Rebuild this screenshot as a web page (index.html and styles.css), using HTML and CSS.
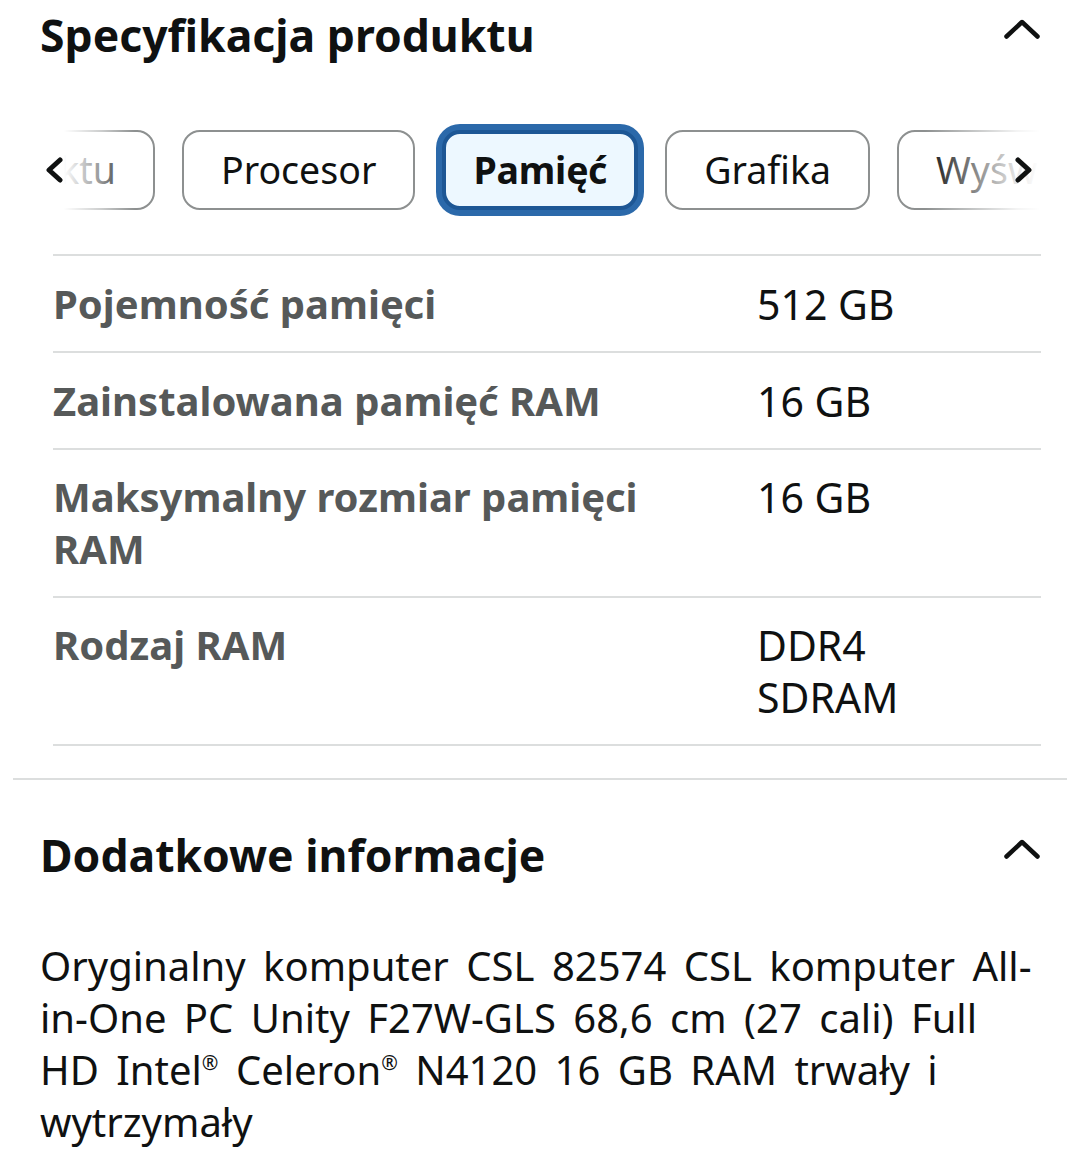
FILE: index.html
```html
<!DOCTYPE html>
<html lang="pl">
<head>
<meta charset="utf-8">
<title>Specyfikacja produktu</title>
<link rel="stylesheet" href="styles.css">
</head>
<body>
<section class="section first">
  <div class="section-head">
    <h2 class="section-title">Specyfikacja produktu</h2>
    <svg class="chev" viewBox="0 0 36 20" width="36" height="20"><polyline points="2.5,17.5 18,3 33.5,17.5" fill="none" stroke="#0f1111" stroke-width="4.5" stroke-linecap="round" stroke-linejoin="round"/></svg>
  </div>

  <div class="tabs">
    <div class="tabs-track">
      <div class="tab-clip"><button class="tab">O produktu</button></div>
      <button class="tab">Procesor</button>
      <button class="tab active">Pamięć</button>
      <button class="tab">Grafika</button>
      <button class="tab">Wyświetlacz</button>
    </div>
    <div class="fade fade-left">
      <svg class="arrow" viewBox="0 0 20 26" width="20" height="26"><polyline points="16,3 5,13 16,23" fill="none" stroke="#0f1111" stroke-width="5" stroke-linecap="round" stroke-linejoin="round"/></svg>
    </div>
    <div class="fade fade-right">
      <svg class="arrow" viewBox="0 0 20 26" width="20" height="26"><polyline points="4,3 15,13 4,23" fill="none" stroke="#0f1111" stroke-width="5" stroke-linecap="round" stroke-linejoin="round"/></svg>
    </div>
  </div>

  <table class="spec">
    <tbody>
      <tr><th>Pojemność pamięci</th><td>512 GB</td></tr>
      <tr><th>Zainstalowana pamięć RAM</th><td>16 GB</td></tr>
      <tr><th>Maksymalny rozmiar pamięci RAM</th><td>16 GB</td></tr>
      <tr><th>Rodzaj RAM</th><td>DDR4 SDRAM</td></tr>
    </tbody>
  </table>
</section>

<hr class="divider">

<section class="section second">
  <div class="section-head">
    <h2 class="section-title">Dodatkowe informacje</h2>
    <svg class="chev" viewBox="0 0 36 20" width="36" height="20"><polyline points="2.5,17.5 18,3 33.5,17.5" fill="none" stroke="#0f1111" stroke-width="4.5" stroke-linecap="round" stroke-linejoin="round"/></svg>
  </div>
  <p class="desc">Oryginalny komputer CSL 82574 CSL komputer All-in-One PC Unity F27W-GLS 68,6 cm (27 cali) Full HD Intel<sup>®</sup> Celeron<sup>®</sup> N4120 16 GB RAM trwały i wytrzymały</p>
</section>
</body>
</html>
```

FILE: styles.css
```css
* { box-sizing: border-box; }

html, body {
  margin: 0;
  padding: 0;
  background: #ffffff;
}

body {
  width: 1080px;
  font-family: "Noto Sans", "Open Sans", sans-serif;
  color: #0f1111;
}

.section {
  padding: 0 40px;
}

.section.first {
  padding-top: 5px;
}

.section.second {
  padding-top: 45px;
}

.section-head {
  display: flex;
  align-items: center;
  justify-content: space-between;
  height: 60px;
}

.section-title {
  margin: 0;
  font-size: 44.5px;
  font-weight: 700;
  line-height: 60px;
  color: #0f1111;
}

.chev {
  display: block;
  margin-top: -12px;
}

/* tabs carousel */
.tabs {
  position: relative;
  margin-top: 59px;
  height: 92px;
}

.tabs-track {
  display: flex;
  align-items: center;
  gap: 27px;
  height: 92px;
  padding: 6px 0;
  overflow: hidden;
}

.tab-clip {
  flex: 0 0 115px;
  display: flex;
  justify-content: flex-end;
  overflow: hidden;
  height: 80px;
}

.tab {
  flex: 0 0 auto;
  height: 80px;
  padding: 0 37px;
  border: 2px solid #8d9090;
  border-radius: 18px;
  background: #ffffff;
  font-family: inherit;
  font-size: 37.5px;
  color: #0f1111;
  line-height: 1;
  white-space: nowrap;
}

.tab.active {
  padding: 0 27px;
  border: 4px solid #1d5795;
  box-shadow: 0 0 0 6px #2b69aa;
  background: #edf8ff;
  font-weight: 700;
  letter-spacing: -0.2px;
}

.fade {
  position: absolute;
  top: 4px;
  bottom: 4px;
  display: flex;
  align-items: center;
}

.fade-left {
  left: 0;
  width: 95px;
  background: linear-gradient(to right, #ffffff 0%, #ffffff 25%, rgba(255,255,255,0.55) 65%, rgba(255,255,255,0) 100%);
  padding-left: 4px;
}

.fade-right {
  right: 0;
  width: 115px;
  justify-content: flex-end;
  background: linear-gradient(to left, #ffffff 0%, rgba(255,255,255,0.9) 20%, rgba(255,255,255,0.35) 70%, rgba(255,255,255,0) 100%);
  padding-right: 6px;
}

.arrow {
  display: block;
}

/* spec table */
.spec {
  width: 988px;
  margin: 38px 0 0 13px;
  border-collapse: collapse;
  border-top: 2px solid #dcdede;
}

.spec tr {
  border-bottom: 2px solid #dcdede;
}

.spec th,
.spec td {
  padding: 22px 0 21px;
  line-height: 52px;
  vertical-align: top;
  text-align: left;
}

.spec tr:nth-child(n+3) th,
.spec tr:nth-child(n+3) td {
  padding-top: 21px;
}

.spec th {
  width: 704px;
  padding-right: 50px;
  font-size: 40px;
  font-weight: 700;
  color: #565959;
}

.spec td {
  padding-right: 60px;
  font-size: 41px;
  font-weight: 400;
  color: #0f1111;
}

.divider {
  margin: 32px 13px 0;
  border: 0;
  border-top: 2px solid #dcdede;
  height: 0;
}

.desc {
  margin: 55px 2px 0 0;
  font-size: 40px;
  line-height: 52px;
  word-spacing: 7px;
  color: #0f1111;
}

.desc sup {
  font-size: 0.5em;
  line-height: 0;
  word-spacing: 0;
  vertical-align: 0.75em;
}
```
